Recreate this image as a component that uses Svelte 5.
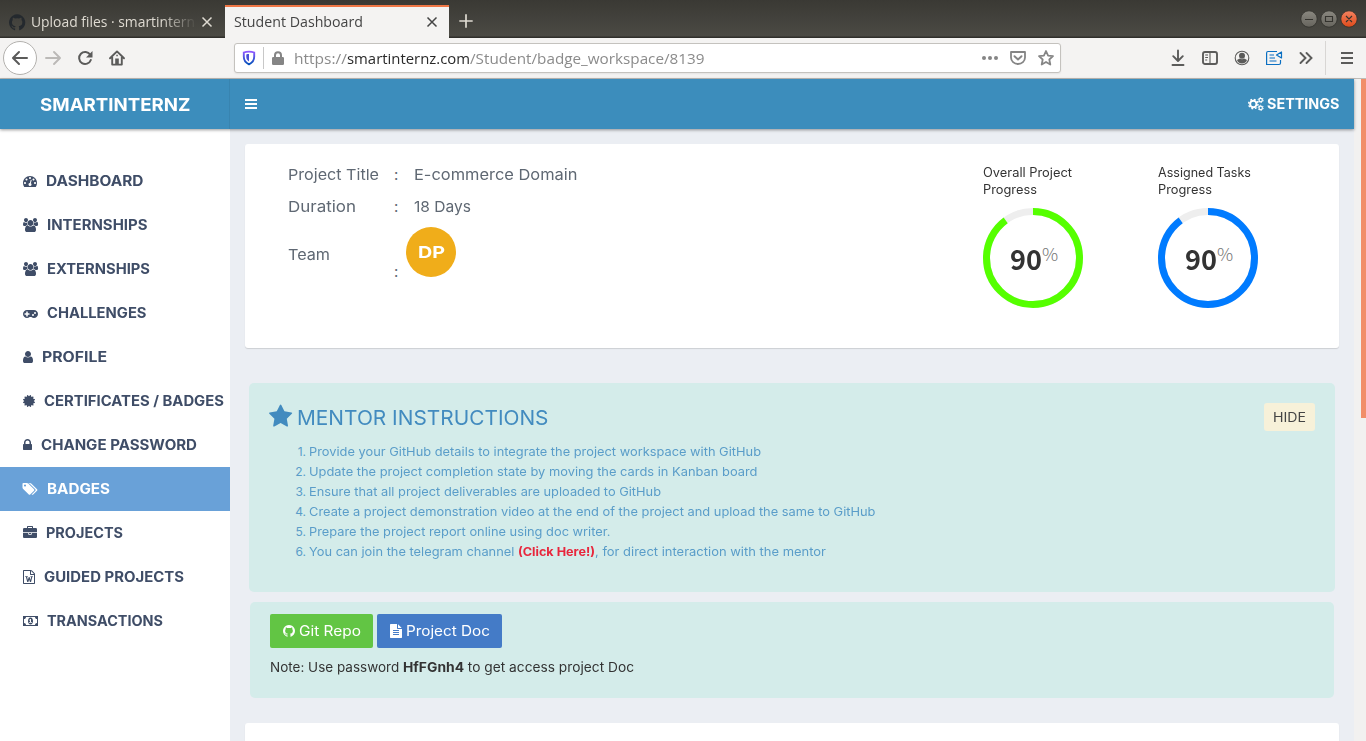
<script>
  // Stretches a label horizontally so that it fills the given width.
  function fit(node, width) {
    const natural = node.getBoundingClientRect().width;
    node.style.width = `${width}px`;
    node.style.transform = `scaleX(${width / natural})`;
  }

  const paths = {
    dashboard: 'M384 1152q0-53-37.5-90.5t-90.5-37.5-90.5 37.5-37.5 90.5 37.5 90.5 90.5 37.5 90.5-37.5 37.5-90.5zm192-448q0-53-37.5-90.5t-90.5-37.5-90.5 37.5-37.5 90.5 37.5 90.5 90.5 37.5 90.5-37.5 37.5-90.5zm428 481l101-382q6-26-7.5-48.5t-38.5-29.5-48 6.5-30 39.5l-101 382q-60 5-107 43.5t-63 98.5q-20 77 20 146t117 89 146-20 89-117q16-60-6-117t-72-91zm660-33q0-53-37.5-90.5t-90.5-37.5-90.5 37.5-37.5 90.5 37.5 90.5 90.5 37.5 90.5-37.5 37.5-90.5zm-640-640q0-53-37.5-90.5t-90.5-37.5-90.5 37.5-37.5 90.5 37.5 90.5 90.5 37.5 90.5-37.5 37.5-90.5zm448 192q0-53-37.5-90.5t-90.5-37.5-90.5 37.5-37.5 90.5 37.5 90.5 90.5 37.5 90.5-37.5 37.5-90.5zm320 448q0 261-141 483-19 29-54 29h-1402q-35 0-54-29-141-221-141-483 0-182 71-348t191-286 286-191 348-71 348 71 286 191 191 286 71 348z',
    users: 'M593 896q-162 5-265 128h-134q-82 0-138-40.5t-56-118.5q0-353 124-353 6 0 43.5 21t97.5 42.5 119 21.5q67 0 133-23-5 37-5 66 0 159 93 293zm1071 637q0 120-73 189.5t-194 69.5h-874q-121 0-194-69.5t-73-189.5q0-53 3.5-103.5t14-109 26.5-108.5 43-97.5 62-81 85.5-53.5 111.5-20q10 0 43 21.5t73 48 107 48 135 21.5 135-21.5 107-48 73-48 43-21.5q61 0 111.5 20t85.5 53.5 62 81 43 97.5 26.5 108.5 14 109 3.5 103.5zm-1024-1277q0 106-75 181t-181 75-181-75-75-181 75-181 181-75 181 75 75 181zm704 384q0 159-112.5 271.5t-271.5 112.5-271.5-112.5-112.5-271.5 112.5-271.5 271.5-112.5 271.5 112.5 112.5 271.5zm576 225q0 78-56 118.5t-138 40.5h-134q-103-123-265-128 93-134 93-293 0-29-5-66 66 23 133 23 59 0 119-21.5t97.5-42.5 43.5-21q124 0 124 353zm-128-609q0 106-75 181t-181 75-181-75-75-181 75-181 181-75 181 75 75 181z',
    gamepad: 'M832 1088V960q0-32-32-32H608V736q0-32-32-32H448q-32 0-32 32v192H224q-32 0-32 32v128q0 32 32 32h192v192q0 32 32 32h128q32 0 32-32v-192h192q32 0 32-32zm576 64a128 128 0 1 0-256 0 128 128 0 1 0 256 0zm256-256a128 128 0 1 0-256 0 128 128 0 1 0 256 0zm256 128q0 212-150 362t-362 150q-192 0-338-128H850q-146 128-338 128-212 0-362-150T0 1024t150-362 362-150h896q212 0 362 150t150 362z',
    user: 'M1536 1399q0 109-62.5 187t-150.5 78h-854q-88 0-150.5-78t-62.5-187q0-85 8.5-160.5t31.5-152 58.5-131 94-89 134.5-34.5q131 128 313 128t313-128q76 0 134.5 34.5t94 89 58.5 131 31.5 152 8.5 160.5zm-256-887q0 159-112.5 271.5t-271.5 112.5-271.5-112.5-112.5-271.5 112.5-271.5 271.5-112.5 271.5 112.5 112.5 271.5z',
    certificate: 'M1504 896l138 135q30 28 20 70-12 41-52 51l-188 48 53 186q12 41-19 70-29 31-70 19l-186-53-48 188q-10 40-51 52-12 2-19 2-31 0-51-22l-135-138-135 138q-28 30-70 20-41-11-51-52l-48-188-186 53q-41 12-70-19-31-29-19-70l53-186-188-48q-40-10-52-51-10-42 20-70l138-135-138-135q-30-28-20-70 12-41 52-51l188-48-53-186q-12-41 19-70 29-31 70-19l186 53 48-188q10-41 51-51 41-12 70 19l135 139 135-139q29-30 70-19 41 10 51 51l48 188 186-53q41-12 70 19 31 29 19 70l-53 186 188 48q40 10 52 51 10 42-20 70z',
    lock: 'M640 768h512v-192q0-106-75-181t-181-75-181 75-75 181v192zm832 96v576q0 40-28 68t-68 28h-960q-40 0-68-28t-28-68v-576q0-40 28-68t68-28h32v-192q0-184 132-316t316-132 316 132 132 316v192h32q40 0 68 28t28 68z',
    tags: 'M384 448q0-53-37.5-90.5t-90.5-37.5-90.5 37.5-37.5 90.5 37.5 90.5 90.5 37.5 90.5-37.5 37.5-90.5zm1067 576q0 53-37 90l-491 492q-39 37-91 37-53 0-90-37l-715-716q-38-37-64.5-101t-26.5-117v-416q0-52 38-90t90-38h416q53 0 117 26.5t102 64.5l715 714q37 39 37 91zm384 0q0 53-37 90l-491 492q-39 37-91 37-36 0-59-14t-53-45l470-470q37-37 37-90 0-52-37-91l-715-714q-38-38-102-64.5t-117-26.5h224q53 0 117 26.5t102 64.5l715 714q37 39 37 91z',
    briefcase: 'M640 256h512v-128h-512v128zm1152 640v480q0 66-47 113t-113 47h-1472q-66 0-113-47t-47-113v-480h672v160q0 26 19 45t45 19h320q26 0 45-19t19-45v-160h672zm-768 0v128h-256v-128h256zm768-480v384h-1792v-384q0-66 47-113t113-47h352v-160q0-40 28-68t68-28h576q40 0 68 28t28 68v160h352q66 0 113 47t47 113z',
    word: 'M1596 380q28 28 48 76t20 88v1152q0 40-28 68t-68 28H224q-40 0-68-28t-28-68V96q0-40 28-68t68-28h896q40 0 88 20t76 48zm-444-244v376h376q-10-29-22-41l-313-313q-12-12-41-22zm384 1528V640h-416q-40 0-68-28t-28-68V128H256v1536zM410 810h330v100h-80l86 370 118-380h104l120 380 80-370h-80V810h290v100h-62l-160 640h-142l-98-350-102 350H672L500 910h-90z',
    money: 'M0 256h1920v1280H0zM128 640v512q106 0 181 75t75 181h1152q0-106 75-181t181-75V640q-106 0-181-75t-75-181H384q0 106-75 181t-181 75zM960 448q150 0 235 132t85 316-85 316-235 132-235-132-85-316 85-316 235-132zM768 1024v96h384v-96h-128V640h-98L770 784l66 70 60-54v224z',
    star: 'M1728 647q0 22-26 48l-363 354 86 500q1 7 1 20 0 21-10.5 35.5t-30.5 14.5q-19 0-40-12l-449-236-449 236q-22 12-40 12-21 0-31.5-14.5t-10.5-35.5q0-6 2-20l86-500-364-354q-25-27-25-48 0-37 56-46l502-73 225-455q19-41 49-41t49 41l225 455 502 73q56 9 56 46z',
    github: 'M896 128q209 0 385.5 103t279.5 279.5 103 385.5q0 251-146.5 451.5t-378.5 277.5q-27 5-40-7t-13-30q0-3 .5-76.5t.5-134.5q0-97-52-142 57-6 102.5-18t94-39 81-66.5 53-105 20.5-150.5q0-119-79-206 37-91-8-204-28-9-81 11t-92 44l-38 24q-93-26-192-26t-192 26q-16-11-42.5-27t-83.5-38.5-85-13.5q-45 113-8 204-79 87-79 206 0 85 20.5 150t52.5 105 80.5 67 94 39 102.5 18q-39 36-49 103-21 10-45 15t-57 5-65.5-21.5-55.5-62.5q-19-32-48.5-52t-49.5-24l-20-3q-21 0-29 4.5t-5 11.5 9 14 13 12l7 5q22 10 43.5 38t31.5 51l10 23q13 38 44 61.5t67 30 69.5 7 55.5-3.5l23-4q0 38 .5 88.5t.5 54.5q0 18-13 30t-40 7q-232-77-378.5-277.5t-146.5-451.5q0-209 103-385.5t279.5-279.5 385.5-103z',
    doc: 'M1596 476q14 14 28 36h-472v-472q22 14 36 28zm-476 164h544v1056q0 40-28 68t-68 28h-1344q-40 0-68-28t-28-68v-1600q0-40 28-68t68-28h800v544q0 40 28 68t68 28zm160 736v-64q0-14-9-23t-23-9h-704q-14 0-23 9t-9 23v64q0 14 9 23t23 9h704q14 0 23-9t9-23zm0-256v-64q0-14-9-23t-23-9h-704q-14 0-23 9t-9 23v64q0 14 9 23t23 9h704q14 0 23-9t9-23zm0-256v-64q0-14-9-23t-23-9h-704q-14 0-23 9t-9 23v64q0 14 9 23t23 9h704q14 0 23-9t9-23z'
  };

  // icon: path name, left edge and advance on the 1792-unit grid
  const menu = [
    { label: 'DASHBOARD', icon: 'dashboard', x: 0, w: 1792, width: 97.5 },
    { label: 'INTERNSHIPS', icon: 'users', x: 0, w: 1920, width: 100.5 },
    { label: 'EXTERNSHIPS', icon: 'users', x: 0, w: 1920, width: 103 },
    { label: 'CHALLENGES', icon: 'gamepad', x: 0, w: 1920, width: 99.5 },
    { label: 'PROFILE', icon: 'user', x: 256, w: 1280, width: 65 },
    { label: 'CERTIFICATES / BADGES', icon: 'certificate', x: 128, w: 1536, width: 180 },
    { label: 'CHANGE PASSWORD', icon: 'lock', x: 320, w: 1152, width: 156 },
    { label: 'BADGES', icon: 'tags', x: 0, w: 1920, width: 63, active: true },
    { label: 'PROJECTS', icon: 'briefcase', x: 0, w: 1792, width: 77 },
    { label: 'GUIDED PROJECTS', icon: 'word', x: 128, w: 1536, width: 140 },
    { label: 'TRANSACTIONS', icon: 'money', x: 0, w: 1920, width: 116 }
  ];

  const steps = [
    ['Provide your GitHub details to integrate the project workspace with GitHub', 452],
    ['Update the project completion state by moving the cards in Kanban board', 448.5],
    ['Ensure that all project deliverables are uploaded to GitHub', 352],
    ['Create a project demonstration video at the end of the project and upload the same to GitHub', 566.5],
    ['Prepare the project report online using doc writer.', 301.5]
  ];

  const rings = [
    { head: 'Overall Project', width: 89, color: '#55ff00' },
    { head: 'Assigned Tasks', width: 93, color: '#007bff' }
  ];
</script>

{#snippet glyph(name, x, w, size)}
  <svg class="glyph" width={(w / 1792) * size} height={size} viewBox="{x} 0 {w} 1792">
    <path fill-rule={name === 'users' ? 'nonzero' : 'evenodd'} d={paths[name]} />
  </svg>
{/snippet}

{#snippet cross()}
  <svg width="12" height="12" viewBox="0 0 12 12"><path class="line" d="M1.5 1.5l9 9M10.5 1.5l-9 9" stroke-width="1.5" /></svg>
{/snippet}

<div class="window">
  <div class="tabbar">
    <div class="tab">
      <span class="cat">{@render glyph('github', 128, 1536, 19)}</span>
      <span class="tabtext fade"><span use:fit={164}>Upload files · smartintern</span></span>
      {@render cross()}
    </div>
    <div class="tab current">
      <span class="tabtext"><span use:fit={129}>Student Dashboard</span></span>
      {@render cross()}
    </div>
    <div class="plus"><svg width="16" height="16" viewBox="0 0 16 16"><path class="line" d="M8 1.3v13.4M1.3 8h13.4" stroke-width="1.7" /></svg></div>
    <div class="controls">
      <svg width="58" height="20" viewBox="0 0 58 20">
        <defs>
          <linearGradient id="grey" x2="0" y2="1"><stop stop-color="#8a8880" /><stop offset="1" stop-color="#66645d" /></linearGradient>
          <linearGradient id="red" x2="0" y2="1"><stop stop-color="#f58260" /><stop offset="1" stop-color="#dd4a1a" /></linearGradient>
        </defs>
        <g stroke="#2f2e29" stroke-width=".8">
          <circle cx="9" cy="10" r="8.2" fill="url(#grey)" /><circle cx="29" cy="10" r="8.2" fill="url(#grey)" /><circle cx="49" cy="10" r="8.2" fill="url(#red)" />
        </g>
        <g fill="none" stroke="#34332e" stroke-width="1.1"><path d="M5 10.5h8M25.5 7.5h7v5h-7zM46 7l6 6M52 7l-6 6" /></g>
      </svg>
    </div>
  </div>

  <div class="toolbar">
    <div class="back"><svg width="18" height="16" viewBox="0 0 18 16"><path class="line" d="M16 8H2.5M8 2L2 8l6 6" stroke-width="2" stroke-linecap="round" stroke-linejoin="round" /></svg></div>
    <div class="cell dim"><svg width="18" height="16" viewBox="0 0 18 16"><path class="line" d="M2 8h13.500M10 2l6 6-6 6" stroke-width="1.9" stroke-linecap="round" stroke-linejoin="round" /></svg></div>
    <div class="cell"><svg width="16" height="16" viewBox="0 0 16 16"><path class="line" d="M13.2 4.8A6 6 0 1 0 13.8 10" stroke-width="2" stroke-linecap="round" /><path d="M15.500 1v6.500H9z" /></svg></div>
    <div class="cell"><svg width="16" height="16" viewBox="0 0 16 16"><path class="line" d="M1 8.300L8 1.400l7 6.900M3.200 7v7.600h9.600V7" stroke-width="1.900" stroke-linejoin="round" stroke-linecap="round" /><path d="M6.200 8.500h3.600V15H6.200zM7.300 4.800h1.500v1.500H7.300z" /></svg></div>
    <div class="address">
      <svg class="shield" width="14" height="16" viewBox="0 0 14 16">
        <defs><linearGradient id="sh" x2="0" y2="1"><stop stop-color="#9059ff" /><stop offset="1" stop-color="#0250bb" /></linearGradient></defs>
        <path d="M7 1.600c2 0 3.800.3 5.200.9v4.300c0 3.400-2 6-5.200 7.500-3.200-1.500-5.200-4.100-5.200-7.500V2.500C3.200 1.900 5 1.600 7 1.600z" fill="none" stroke="url(#sh)" stroke-width="1.9" />
        <path d="M7 4v7.500C5.200 10.400 4.300 8.800 4.300 6.800V4.400C5.100 4.100 6 4 7 4z" fill="#4a4fd8" />
      </svg>
      <i class="bar"></i>
      <svg class="padlock" width="12" height="14" viewBox="0 0 12 14"><path d="M1.200 6H2V4.200a4 4 0 0 1 8 0V6h.800q1.200 0 1.200 1.200v5.600q0 1.200-1.200 1.200H1.200Q0 14 0 12.800V7.200Q0 6 1.200 6zM4 6h4V4.200a2 2 0 0 0-4 0z" fill-rule="evenodd" /></svg>
      <span class="url"><span use:fit={53}>https://</span><b use:fit={123}>smartinternz.com</b><span use:fit={234.5}>/Student/badge_workspace/8139</span></span>
      <div class="tools">
        <svg width="18" height="16" viewBox="0 0 18 16"><circle cx="3" cy="8" r="2" /><circle cx="9" cy="8" r="2" /><circle cx="15" cy="8" r="2" /></svg>
        <svg width="18" height="16" viewBox="0 0 18 16"><path class="line" d="M2 2h14v5.500a7 6.500 0 0 1-14 0z" stroke-width="1.8" stroke-linejoin="round" /><path class="line" d="M5.500 6.200L9 9.500l3.500-3.300" stroke-width="1.900" stroke-linecap="round" stroke-linejoin="round" /></svg>
        <svg width="18" height="18" viewBox="0 0 18 18"><path class="line" d="M9 2l2.100 4.600 4.900.6-3.700 3.300 1 5L9 13l-4.300 2.500 1-5L2 7.200l4.900-.6z" stroke-width="1.800" stroke-linejoin="round" /></svg>
      </div>
    </div>
    <div class="actions">
      <div class="cell"><svg width="14" height="16" viewBox="0 0 14 16"><path class="line" d="M7 .5v10M2.200 6.200L7 11l4.800-4.800M1.500 15h11" stroke-width="1.900" stroke-linecap="round" stroke-linejoin="round" /></svg></div>
      <div class="cell"><svg width="16" height="16" viewBox="0 0 16 16"><rect class="line" x="1" y="2" width="14" height="12" rx="2" stroke-width="1.900" /><path class="line" d="M8 2v12M3.200 5h2.800M3.200 7.500h2.800M3.200 10h2" stroke-width="1.100" /></svg></div>
      <div class="cell"><svg width="16" height="16" viewBox="0 0 16 16"><circle class="line" cx="8" cy="8" r="6.800" stroke-width="1.100" /><circle cx="8" cy="5.800" r="3" /><path d="M3 10q2-1.500 3-1.500 2 1.500 4 0 1 0 3 1.500-1 3.200-5 3.500-4-.3-5-3.500z" /></svg></div>
      <div class="cell blue"><svg width="18" height="16" viewBox="0 0 18 16"><path class="line" d="M12 1.500H3Q1.600 1.500 1.600 3v11.500H14q1.500 0 1.500-1.500v-3M4.500 5h4.500M4.500 8h5.500M4.500 11h7" stroke-width="1.200" /><path class="line" d="M16.500 2v6l-5-3z" stroke-width="1.200" stroke-linejoin="round" /></svg></div>
      <div class="cell"><svg width="16" height="16" viewBox="0 0 16 16"><path class="line" d="M2.500 3l5 5-5 5M8.500 3l5 5-5 5" stroke-width="1.900" stroke-linecap="round" /></svg></div>
      <i class="bar tall"></i>
      <div class="cell"><svg width="12" height="14" viewBox="0 0 12 14"><path class="line" d="M0 2h12M0 7h12M0 12h12" stroke-width="2" /></svg></div>
    </div>
  </div>

  <div class="page">
    <div class="site">
      <header>
        <div class="logo"><span use:fit={150.5}>SMARTINTERNZ</span></div>
        <nav>
          <svg width="12" height="12" viewBox="0 0 12 12"><path d="M0 1h12v2H0zM0 5h12v2H0zM0 9h12v2H0z" /></svg>
          <div class="settings">
            <svg class="cogs" width="16" height="14" viewBox="0 0 16 14">
              <circle cx="5.300" cy="7" r="3.200" stroke-width="2" />
              <circle cx="5.300" cy="7" r="4.700" stroke-width="1.400" stroke-dasharray="1.850 1.840" />
              <circle cx="12.700" cy="3.100" r="1.700" stroke-width="1.200" /><circle cx="12.700" cy="3.100" r="2.600" stroke-width=".9" stroke-dasharray="1.360 1.362" />
              <circle cx="12.700" cy="10.900" r="1.700" stroke-width="1.200" /><circle cx="12.700" cy="10.900" r="2.600" stroke-width=".9" stroke-dasharray="1.360 1.362" />
            </svg>
            <span use:fit={72.500}>SETTINGS</span>
          </div>
        </nav>
      </header>

      <div class="body">
        <aside>
          {#each menu as item}
            <a class:active={item.active}>
              {@render glyph(item.icon, item.x, item.w, 14)}
              <span use:fit={item.width}>{item.label}</span>
            </a>
          {/each}
        </aside>

        <main>
          <section class="card">
            <dl>
              <dt><span use:fit={91}>Project Title</span></dt><dd>:</dd><dd><span use:fit={163.5}>E-commerce Domain</span></dd>
              <dt><span use:fit={68}>Duration</span></dt><dd>:</dd><dd><span use:fit={57}>18 Days</span></dd>
              <dt><span use:fit={42}>Team</span></dt><dd class="low">:</dd><dd class="face"><div class="avatar"><span use:fit={27}>DP</span></div></dd>
            </dl>
            <div class="rings">
              {#each rings as ring}
                <div class="ring">
                  <p><span use:fit={ring.width}>{ring.head}</span><br /><span use:fit={54}>Progress</span></p>
                  <div class="dial">
                    <svg class="track" width="100" height="100" viewBox="0 0 100 100">
                      <circle cx="50" cy="50" r="46.500" stroke="#eee" />
                      <circle cx="50" cy="50" r="46.500" stroke={ring.color} pathLength="100" stroke-dasharray="90 10" transform="rotate(-90 50 50)" />
                    </svg>
                    <div class="value"><span use:fit={32}>90</span><sup>%</sup></div>
                  </div>
                </div>
              {/each}
            </div>
          </section>

          <section class="mentor">
            <div class="head">
              {@render glyph('star', 64, 1664, 25)}
              <h2><span use:fit={251.5}>MENTOR INSTRUCTIONS</span></h2>
              <button class="hide"><span use:fit={33}>HIDE</span></button>
            </div>
            <ol>
              {#each steps as [text, width], i}
                <li><em>{i + 1}.</em><span use:fit={width}>{text}</span></li>
              {/each}
              <li><em>6.</em><span use:fit={209}>You can join the telegram channel&nbsp;</span><b use:fit={77}>(Click Here!)</b><span use:fit={231}>, for direct interaction with the mentor</span></li>
            </ol>
          </section>

          <section class="repo">
            <div class="buttons">
              <button class="git">{@render glyph('github', 128, 1536, 14)}<span use:fit={62}>Git Repo</span></button>
              <button class="docs">{@render glyph('doc', 128, 1536, 14)}<span use:fit={84}>Project Doc</span></button>
            </div>
            <p><span use:fit={133}>Note: Use password&nbsp;</span><b use:fit={61}>HfFGnh4</b><span use:fit={170}>&nbsp;to get access project Doc</span></p>
          </section>

          <section class="card next"></section>
        </main>
      </div>
    </div>
    <div class="scroll"><i></i></div>
  </div>
</div>

<style>
  :global(body) { margin: 0; overflow: hidden; }
  * { box-sizing: border-box; }
  svg { display: block; flex: none; fill: currentColor; overflow: visible; }
  .line { fill: none; stroke: currentColor; }
  .cogs { fill: none; stroke: #fff; }
  .track { fill: none; stroke-width: 7; }
  span, b { display: inline-block; white-space: nowrap; transform-origin: 0 50%; text-align: left; }
  button { border: 0; padding: 0; font: inherit; display: flex; align-items: center; }

  .window { width: 1366px; height: 741px; display: flex; flex-direction: column; overflow: hidden; font-family: "Open Sans", sans-serif; }
  .tabbar { height: 38px; flex: none; display: flex; background: linear-gradient(#3a3934, #4b4a44 36px, #302f2b 37px); color: #dfdbd2; font-size: 14px; }
  .tab { width: 225px; display: flex; align-items: center; padding: 6px 11px 0 9px; }
  .tab .tabtext { flex: 1; line-height: 30px; }
  .tab .fade { margin: 0 6px 0 6px; flex: none; width: 164px; -webkit-mask-image: linear-gradient(90deg, #000 130px, transparent 166px); mask-image: linear-gradient(90deg, #000 130px, transparent 166px); }
  .cat { color: #24292e; }
  .current { width: 224px; margin-top: 5px; padding: 0 11px 2px 9px; background: #f4f3f2; border-top: 2px solid #f07746; color: #444; }
  .current .tabtext { line-height: 28px; padding-top: 1px; }
  .plus { width: 34px; display: flex; align-items: center; justify-content: center; padding-top: 4px; }
  .controls { margin: 9px 8px 0 auto; }

  .toolbar { height: 41px; flex: none; display: flex; align-items: center; background: #f4f3f2; border-bottom: 1px solid #bdbbb8; color: #5b5b5a; padding: 0 3px; }
  .back { width: 34px; height: 34px; border: 1px solid #b3b1ae; border-radius: 50%; background: #fff; display: flex; align-items: center; justify-content: center; }
  .cell { width: 32px; display: flex; justify-content: center; }
  .dim { color: #bbb9b7; }
  .blue { color: #0a6fc2; }
  .address { margin-left: 101px; width: 827px; height: 30px; border: 1px solid #c4c2be; border-radius: 3px; background: #fff; display: flex; align-items: center; padding: 0 5px 0 7px; box-shadow: 0 1px 2px #0001; }
  .bar { width: 1px; height: 22px; background: #c8c8c8; }
  .shield { margin-right: 7px; }
  .padlock { margin: 0 10px 0 8px; color: #858585; }
  .url { font-size: 14px; color: #8b8b8b; line-height: 20px; padding-top: 2px; }
  .url b { font-weight: 400; color: #2a2a2a; }
  .tools { margin-left: auto; display: flex; align-items: center; gap: 10px; color: #858585; }
  .actions { margin-left: auto; display: flex; align-items: center; }
  .tall { height: 34px; margin: 0 5px 0 3px; background: #d8d6d4; }

  .page { flex: 1; min-height: 0; display: flex; font-family: Inter, sans-serif; }
  .site { width: 1354px; display: flex; flex-direction: column; background: #ebeef3; }
  .scroll { width: 12px; background: #f2f1f0; display: flex; justify-content: flex-end; }
  .scroll i { width: 5px; height: 339px; background: #f18e69; }
  header { height: 50px; flex: none; display: flex; background: #3c8dbc; color: #fff; box-shadow: 0 1px 3px #0006; position: relative; font-weight: 700; }
  .logo { width: 230px; padding-left: 39.500px; line-height: 51px; font-size: 18px; border-right: 1px solid #3884b0; font-weight: 700; }
  nav { flex: 1; display: flex; align-items: center; justify-content: space-between; padding: 0 14.500px 0 15px; }
  .settings { display: flex; align-items: center; gap: 3px; font-size: 14px; }
  .settings span { margin-top: -1px; }
  .body { flex: 1; min-height: 0; display: flex; }
  aside { width: 230px; flex: none; background: #fff; padding-top: 30px; color: #3f4d67; font-size: 14px; font-weight: 700; }
  aside a { height: 44px; display: flex; align-items: center; gap: 9px; padding-left: 23px; }
  aside span { margin-top: -1px; }
  aside a.active { background: #69a1d8; color: #fff; }

  main { flex: 1; min-width: 0; padding: 15px 15px 0; display: flex; flex-direction: column; overflow: hidden; }
  .card { height: 204px; flex: none; background: #fff; border-radius: 3px; box-shadow: 0 1px 1px #0002; display: flex; justify-content: space-between; padding: 14px 81px 0 43px; }
  dl { margin: 0; display: grid; grid-template-columns: 106px 20px 200px; grid-template-rows: 32px 32px 64px; align-items: center; align-content: start; font-size: 15px; color: #5f6873; }
  dd { margin: 0; }
  .low { padding-top: 34px; }
  .face { align-self: start; margin: 5px 0 0 -8px; }
  .avatar { width: 50px; height: 50px; border-radius: 50%; background: #f0ad1a; color: #fff; display: flex; align-items: center; justify-content: center; font-size: 16.500px; font-weight: 700; }
  .rings { display: flex; gap: 75px; padding-top: 6px; }
  .ring { width: 100px; }
  .ring p { margin: 0; font-size: 12.500px; line-height: 17px; color: #333; white-space: nowrap; }
  .ring p span { vertical-align: top; }
  .dial { margin-top: 10px; display: grid; place-items: center; }
  .dial > * { grid-area: 1 / 1; }
  .value { font: 600 28px/36px "Noto Sans CJK SC", sans-serif; color: #333; display: flex; padding: 0 0 1px 2px; }
  .value sup { font-size: 18px; line-height: 26px; font-weight: 300; color: #777; vertical-align: top; }

  .mentor { margin: 35px 4px 0; height: 209px; flex: none; border-radius: 5px; background: #d4ecea; padding: 20px; color: #428bbf; }
  .head { display: flex; height: 28px; align-items: center; }
  .head :global(svg) { margin-top: -2px; }
  h2 { margin: 2px 0 0 5px; font-size: 20px; line-height: 28px; font-weight: 400; flex: 1; }
  .hide { width: 51px; height: 28px; border-radius: 3px; background: #f7f1d9; color: #444; font-size: 13px; justify-content: center; }
  ol { list-style: none; margin: 11px 0 0; padding: 0; font-size: 12px; line-height: 20px; color: #5a9dc9; }
  li { display: flex; }
  em { font-style: normal; width: 37px; margin-right: 3px; text-align: right; }
  li b { color: #e8263c; font-weight: 700; }
  .repo { margin: 10px 5px 0; height: 96px; flex: none; border-radius: 5px; background: #d4ecea; padding: 12px 20px; font-size: 13px; color: #333; }
  .buttons { display: flex; gap: 4px; color: #fff; font-size: 14px; }
  .buttons button { height: 34px; border-radius: 2px; padding-left: 13px; gap: 4px; color: #fff; }
  .buttons span { margin-top: -1px; }
  .git { width: 103px; background: #62c544; }
  .docs { width: 125px; background: #447bc7; }
  .repo p { margin: 9px 0 0; line-height: 20px; display: flex; }
  .next { margin-top: 25px; }
</style>
